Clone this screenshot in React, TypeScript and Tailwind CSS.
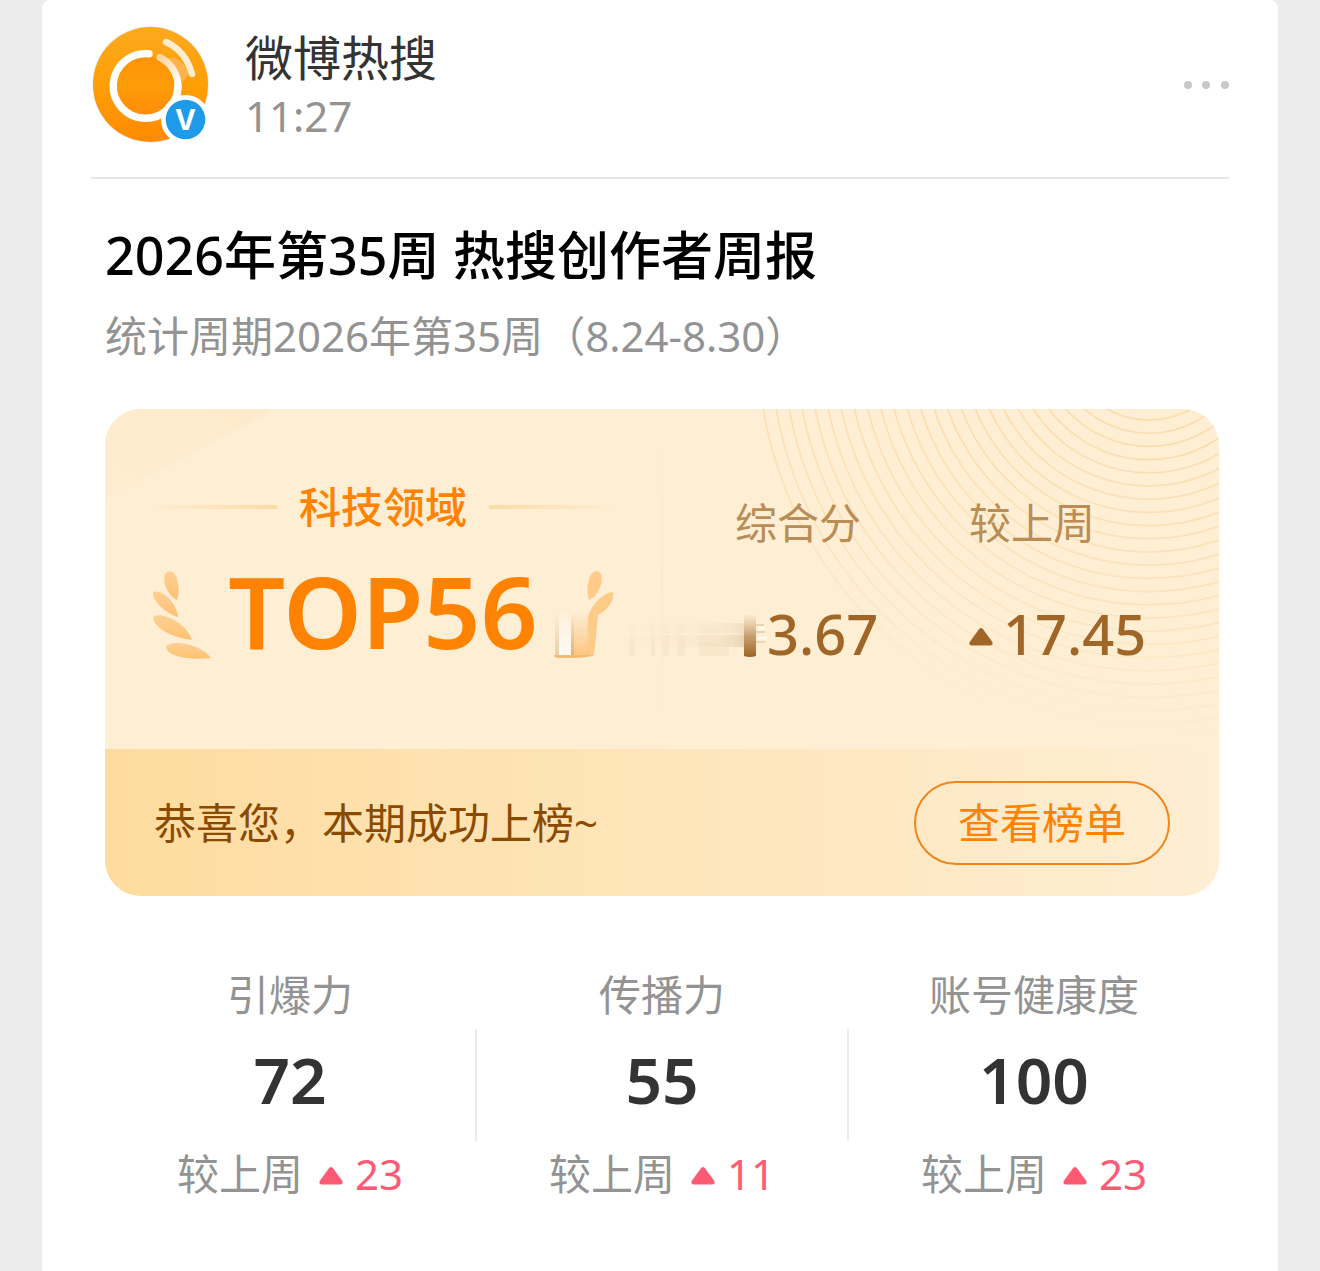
import clsx from 'clsx';

interface Stat {
    label: string;
    value: number;
    change: number;
}

const stats: Stat[] = [
    { label: '引爆力', value: 72, change: 23 },
    { label: '传播力', value: 55, change: 11 },
    { label: '账号健康度', value: 100, change: 23 }
];

const rings = Array.from({ length: 25 }, (_, i) => ({
    cy: -75 + i * 0.5,
    r: 86 + i * 12.7
}));

function Avatar() {
    return (
        <svg viewBox="-1 0 118 118" className="size-[118px] shrink-0" role="img" aria-label="微博热搜">
            <defs>
                <linearGradient id="avatarBg" x1="0" y1="0" x2="0" y2="1">
                    <stop offset="0" stopColor="#fda91f" />
                    <stop offset="0.5" stopColor="#ff9f06" />
                    <stop offset="1" stopColor="#ff8a00" />
                </linearGradient>
                <linearGradient id="avatarInner" x1="0" y1="0" x2="0" y2="1">
                    <stop offset="0" stopColor="#ff9406" />
                    <stop offset="0.5" stopColor="#fe9c08" />
                    <stop offset="1" stopColor="#ff8d0a" />
                </linearGradient>
                <linearGradient id="avatarTail" gradientUnits="userSpaceOnUse" x1="68" y1="30" x2="86" y2="58">
                    <stop offset="0" stopColor="#ffd49a" />
                    <stop offset="1" stopColor="#ffffff" />
                </linearGradient>
            </defs>
            <circle cx="58.5" cy="58.5" r="58.3" fill="#e9edf2" />
            <circle cx="58.5" cy="58.5" r="57.5" fill="url(#avatarBg)" />
            <circle cx="53.5" cy="60" r="30" fill="url(#avatarInner)" />
            <path d="M71 32 C78 37 85 44 90 56 L98 47 C93 39 88 34 83 32 Z" fill="#fdb65c" opacity="0.8" />
            <path d="M57 27.8 A32.3 32.3 0 1 0 85.8 60" fill="none" stroke="#fff" strokeWidth="7.4" strokeLinecap="round" />
            <path d="M68 31.5 A32.3 32.3 0 0 1 85 69" fill="none" stroke="url(#avatarTail)" strokeWidth="7" strokeLinecap="round" />
            <path d="M74 16 C87 22 96 33 100 48" fill="none" stroke="#ffedd2" strokeWidth="6.4" strokeLinecap="round" />
            <circle cx="93.5" cy="93.5" r="24.5" fill="#fff" />
            <circle cx="93.5" cy="93.5" r="19.8" fill="#1e9be8" />
            <text x="93.5" y="104" textAnchor="middle" fontSize="28" fontWeight="700" fill="#fff" className="font-['Inter',sans-serif]">
                V
            </text>
        </svg>
    );
}

function UpTriangle({ className }: { className?: string }) {
    return (
        <svg viewBox="0 0 24 20" className={clsx('h-5 w-6 shrink-0', className)} aria-hidden="true">
            <path d="M10 2.2 Q12 0 14 2.2 L23 14.5 Q25 18.5 21 18.5 L3 18.5 Q-1 18.5 1 14.5 Z" fill="currentColor" />
        </svg>
    );
}

function Laurel() {
    return (
        <svg viewBox="12 10 60 90" className="h-[90px] w-[60px] shrink-0" aria-hidden="true">
            <defs>
                <linearGradient id="leaf" x1="0" y1="0" x2="0" y2="1">
                    <stop offset="0" stopColor="#ffcf92" />
                    <stop offset="1" stopColor="#fcc272" />
                </linearGradient>
            </defs>
            <g fill="url(#leaf)">
                <path d="M37 40 C28 36 22 23 25 14 C28 9 35 11 37 19 C39 27 39 34 37 40Z" />
                <path d="M38 57 C25 53 12 41 13 32 C23 29 37 44 38 57Z" />
                <path d="M52 80 C34 78 14 69 13 57 C20 51 46 62 52 80Z" />
                <path d="M71 98 C54 100 28 98 26 87 C31 79 60 83 71 98Z" />
            </g>
        </svg>
    );
}

// the lower leaves of the right branch melt into a pale bar and a stem
function LaurelRight() {
    return (
        <svg viewBox="0 0 60 90" className="h-[90px] w-[60px] shrink-0" aria-hidden="true">
            <defs>
                <linearGradient id="stem" x1="0" y1="0" x2="0" y2="1">
                    <stop offset="0" stopColor="#fbcd90" stopOpacity="0" />
                    <stop offset="0.5" stopColor="#fbd29a" stopOpacity="0.7" />
                    <stop offset="1" stopColor="#fdc57c" />
                </linearGradient>
                <linearGradient id="paleBar" x1="0" y1="0" x2="0" y2="1">
                    <stop offset="0" stopColor="#fff" stopOpacity="0" />
                    <stop offset="0.4" stopColor="#fdf4e6" />
                    <stop offset="1" stopColor="#fffaf2" />
                </linearGradient>
                <linearGradient id="barShade" x1="0" y1="0" x2="0" y2="1">
                    <stop offset="0" stopColor="#c7ac84" stopOpacity="0" />
                    <stop offset="1" stopColor="#c79c5c" stopOpacity="0.75" />
                </linearGradient>
            </defs>
            <path d="M35 30 C44 26 50 13 47 4 C44 -1 37 1 35 9 C33 17 33 24 35 30Z" fill="#ffcb87" />
            <path d="M34 48 C35 38 49 22 59 22 C61 31 53 41 44 45 C43 55 42 70 40 85 L34 87 C33 72 33 60 34 48Z" fill="#fccb88" />
            <rect x="14" y="42" width="22" height="44" fill="url(#stem)" />
            <rect x="1" y="42" width="4" height="43" fill="url(#barShade)" opacity="0.5" />
            <rect x="17" y="42" width="3" height="43" fill="url(#barShade)" opacity="0.6" />
            <rect x="5" y="42" width="12" height="43" fill="url(#paleBar)" />
            <path d="M0 85 H40 Q32 88 20 88 H3 Q0 87 0 85Z" fill="#eebd76" />
        </svg>
    );
}

// faint streaks that run into the score
function ScoreSmear() {
    return (
        <svg viewBox="0 0 144 44" className="absolute right-full bottom-3 h-11 w-36" aria-hidden="true">
            <defs>
                <linearGradient id="smearBar" x1="0" y1="0" x2="0" y2="1">
                    <stop offset="0" stopColor="#b98d55" stopOpacity="0.05" />
                    <stop offset="0.5" stopColor="#a8763b" stopOpacity="0.65" />
                    <stop offset="1" stopColor="#9a6324" />
                </linearGradient>
                <linearGradient id="smearFade" x1="0" y1="0" x2="1" y2="0">
                    <stop offset="0" stopColor="#c9b48c" stopOpacity="0" />
                    <stop offset="0.8" stopColor="#c9b48c" stopOpacity="0.1" />
                    <stop offset="1" stopColor="#b89c74" stopOpacity="0.3" />
                </linearGradient>
                <linearGradient id="smearBlock" x1="0" y1="0" x2="0" y2="1">
                    <stop offset="0" stopColor="#d8c09a" stopOpacity="0" />
                    <stop offset="1" stopColor="#d8c09a" stopOpacity="0.18" />
                </linearGradient>
            </defs>
            <rect x="0" y="10" width="121" height="12" fill="url(#smearFade)" opacity="0.6" />
            <rect x="0" y="22" width="121" height="12" fill="url(#smearFade)" />
            <g fill="url(#smearBlock)">
                <rect x="6" y="8" width="6" height="35" />
                <rect x="28" y="8" width="4" height="35" />
                <rect x="40" y="8" width="6" height="35" />
                <rect x="54" y="8" width="8" height="35" />
                <rect x="76" y="8" width="30" height="35" />
            </g>
            <rect x="0" y="20" width="116" height="2" fill="#fff0d8" opacity="0.6" />
            <path d="M121 2 H133 V43 Q127 45 121 43Z" fill="url(#smearBar)" />
            <path d="M133 12 H141 M133 19 H142 M133 29 H142" stroke="#c5a878" strokeWidth="2" opacity="0.35" />
            <path d="M136 15 H142 M135 25 H144" stroke="#fffaf0" strokeWidth="3" />
        </svg>
    );
}

function RankCard() {
    return (
        <section className="relative mt-[45px] overflow-hidden rounded-[36px] bg-[#feeed3]">
            <svg viewBox="0 0 170 92" className="absolute top-0 left-0 h-[92px] w-[170px]" aria-hidden="true">
                <defs>
                    <linearGradient id="corner" x1="1" y1="0" x2="0" y2="1">
                        <stop offset="0" stopColor="#feeacb" />
                        <stop offset="1" stopColor="#feedd0" />
                    </linearGradient>
                </defs>
                <path d="M0 0 H170 L0 92Z" fill="url(#corner)" />
            </svg>
            <svg viewBox="0 0 470 340" className="absolute top-0 right-0 h-[340px] w-[470px]" aria-hidden="true">
                <defs>
                    <linearGradient id="ringFade" x1="0.7" y1="0" x2="0.4" y2="1">
                        <stop offset="0" stopColor="#fff" />
                        <stop offset="0.5" stopColor="#fff" stopOpacity="0.55" />
                        <stop offset="0.85" stopColor="#fff" stopOpacity="0" />
                    </linearGradient>
                    <mask id="ringMask">
                        <rect width="470" height="340" fill="url(#ringFade)" />
                    </mask>
                </defs>
                <g fill="none" stroke="#fbdcab" strokeWidth="1.6" mask="url(#ringMask)">
                    {rings.map((ring) => (
                        <circle key={ring.r} cx="400" cy={ring.cy} r={ring.r} />
                    ))}
                </g>
            </svg>

            <div className="relative grid grid-cols-[1fr_2px_1fr]">
                <div className="pt-[70px] pb-[76px]">
                    <div className="flex items-center justify-center gap-[22px]">
                        <span className="h-1 w-32 bg-linear-to-l from-[#fbdba6] to-transparent" />
                        <h2 className="text-[42px] leading-14 font-medium text-[#ff8200]">科技领域</h2>
                        <span className="h-1 w-32 bg-linear-to-r from-[#fbdba6] to-transparent" />
                    </div>
                    <div className="mt-[22px] flex items-center justify-center gap-4">
                        <Laurel />
                        <strong className="pb-2.5 text-[100px] leading-[106px] font-semibold text-[#ff8200]">TOP56</strong>
                        <LaurelRight />
                    </div>
                </div>
                <div className="my-3 bg-linear-to-b from-transparent via-[#fdeacb] to-transparent" />
                <dl className="grid grid-cols-2 pt-[86px] pr-4 pl-[72px]">
                    <div>
                        <dt className="text-[42px] leading-14 text-[#b98d55]">综合分</dt>
                        <dd className="mt-[46px] pl-8 text-[56px] leading-[72px] font-medium text-[#a06628]">
                            <span className="relative inline-block">
                                <ScoreSmear />
                                3.67
                            </span>
                        </dd>
                    </div>
                    <div>
                        <dt className="text-[42px] leading-14 text-[#b98d55]">较上周</dt>
                        <dd className="mt-[46px] flex items-center gap-2.5 text-[56px] leading-[72px] font-medium text-[#a06628]">
                            <UpTriangle className="mt-2" />
                            17.45
                        </dd>
                    </div>
                </dl>
            </div>

            <div className="relative flex items-center justify-between bg-linear-to-r from-[#fedc9f] to-[#feeed3] px-[49px] pt-8 pb-[31px]">
                <p className="text-[42px] leading-14 text-[#8a4b00]">恭喜您，本期成功上榜~</p>
                <button type="button" className="rounded-full border-2 border-[#f0861c] px-[42px] py-3 text-[42px] leading-14 text-[#ff8200]">
                    查看榜单
                </button>
            </div>
        </section>
    );
}

export default function App() {
    return (
        <div className="min-h-screen bg-[#ececec] px-[42px] font-['Noto_Sans','Noto_Sans_CJK_SC',sans-serif]">
            <main className="min-h-screen rounded-t-lg bg-white px-[49px] pb-16">
                <header className="flex items-center border-b-2 border-[#e6e6e6] pt-[26px] pb-[33px]">
                    <Avatar />
                    <div className="ml-9 flex-1 pt-0.5">
                        <h3 className="text-[48px] leading-[60px] text-[#333333]">微博热搜</h3>
                        <time className="block text-[42px] leading-14 text-[#939393]">11:27</time>
                    </div>
                    <button type="button" aria-label="更多" className="text-[#c8c8c8]">
                        <svg viewBox="0 0 46 10" className="h-2.5 w-[46px]" fill="currentColor" aria-hidden="true">
                            <circle cx="5" cy="5" r="4" />
                            <circle cx="23" cy="5" r="4" />
                            <circle cx="42" cy="5" r="4" />
                        </svg>
                    </button>
                </header>

                <div className="pt-[42px] pr-2.5 pl-3.5">
                    <h1 className="text-[52px] leading-[68px] font-medium text-black">2026年第35周 热搜创作者周报</h1>
                    <p className="mt-[19px] text-[42px] leading-14 text-[#939393]">统计周期2026年第35周（8.24-8.30）</p>

                    <RankCard />

                    <div className="mt-[71px] flex items-center">
                        {stats.map((stat, idx) => (
                            <div key={stat.label} className="contents">
                                {idx > 0 && <span className="h-28 w-0.5 bg-[#ebebeb]" />}
                                <div className="flex-1 text-center">
                                    <div className="text-[42px] leading-14 text-[#939393]">{stat.label}</div>
                                    <div className="mt-[19px] text-[64px] leading-[76px] font-semibold text-[#333333]">{stat.value}</div>
                                    <div className="mt-7 flex items-center justify-center text-[42px] leading-14 text-[#939393]">
                                        较上周
                                        <UpTriangle className="mt-1 ml-4 text-[#ff5a74]" />
                                        <span className="ml-3 text-[#ff5a74]">{stat.change}</span>
                                    </div>
                                </div>
                            </div>
                        ))}
                    </div>
                </div>
            </main>
        </div>
    );
}
